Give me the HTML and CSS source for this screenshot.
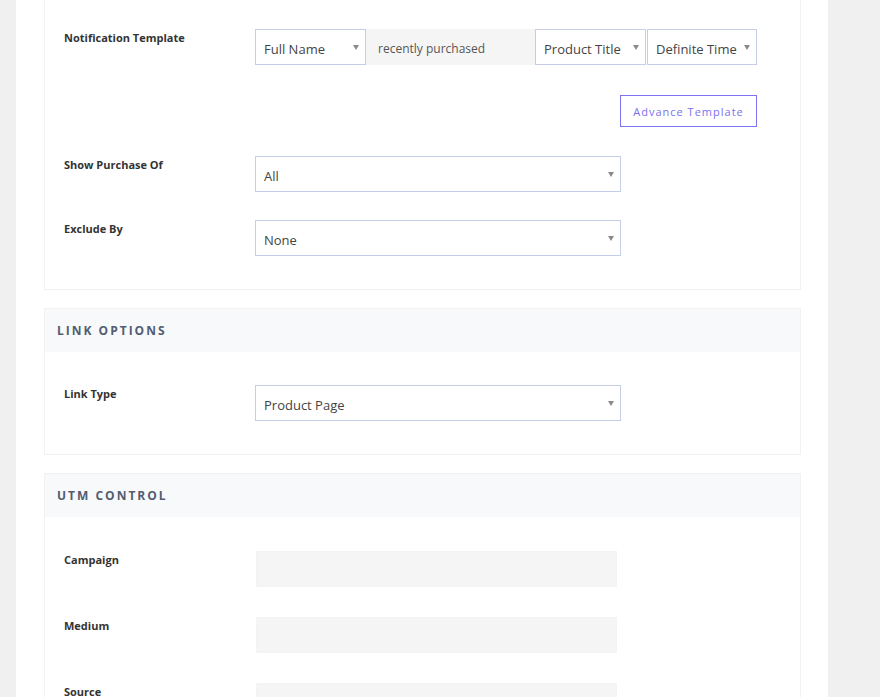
FILE: index.html
```html
<!DOCTYPE html>
<html lang="en">
<head>
    <meta charset="UTF-8">
    <meta name="viewport" content="width=device-width, initial-scale=1.0">
    <title>Notification Settings</title>
    <link rel="stylesheet" href="styles.css">
</head>
<body>
    <div class="page">
        <div class="card card-cut">
            <div class="card-body">
                <div class="row row-template">
                    <label class="label">Notification Template</label>
                    <div class="field">
                        <div class="template">
                            <div class="select small">Full Name</div>
                            <div class="static">recently purchased</div>
                            <div class="select small">Product Title</div>
                            <div class="select small">Definite Time</div>
                        </div>
                        <div class="button-container">
                            <button class="btn-outline">Advance Template</button>
                        </div>
                    </div>
                </div>
                <div class="row">
                    <label class="label">Show Purchase Of</label>
                    <div class="field">
                        <div class="select wide">All</div>
                    </div>
                </div>
                <div class="row">
                    <label class="label">Exclude By</label>
                    <div class="field">
                        <div class="select wide">None</div>
                    </div>
                </div>
            </div>
        </div>

        <div class="card">
            <div class="card-header">Link Options</div>
            <div class="card-body">
                <div class="row">
                    <label class="label">Link Type</label>
                    <div class="field">
                        <div class="select wide">Product Page</div>
                    </div>
                </div>
            </div>
        </div>

        <div class="card">
            <div class="card-header">UTM Control</div>
            <div class="card-body inputs">
                <div class="row">
                    <label class="label">Campaign</label>
                    <div class="field">
                        <input type="text" class="text-input">
                    </div>
                </div>
                <div class="row">
                    <label class="label">Medium</label>
                    <div class="field">
                        <input type="text" class="text-input">
                    </div>
                </div>
                <div class="row">
                    <label class="label">Source</label>
                    <div class="field">
                        <input type="text" class="text-input">
                    </div>
                </div>
            </div>
        </div>
    </div>
</body>
</html>
```

FILE: styles.css
```css
body {
    font-family: "Open Sans", Arial, sans-serif;
    margin: 0;
    padding: 0;
    background: #f0f0f0;
    color: #333;
}

.page {
    margin-left: 16px;
    width: 757px;
    min-height: 697px;
    padding: 0 27px 0 28px;
    background: #fff;
}

.card {
    border: 1px solid #f2f2f2;
    margin-bottom: 18px;
    background: #fff;
}

.card-cut {
    border-top: none;
}

.card-header {
    height: 43px;
    line-height: 43px;
    padding-left: 12px;
    background: #f8f9fb;
    font-size: 12px;
    font-weight: 700;
    letter-spacing: 2px;
    text-transform: uppercase;
    color: #525d71;
}

.card-body {
    padding: 33px 19px 33px 19px;
}

.card-cut .card-body {
    padding-top: 29px;
}

.row {
    display: flex;
    margin-bottom: 28px;
}

.row-template {
    margin-bottom: 29px;
}

.row:last-child {
    margin-bottom: 0;
}

.inputs {
    padding-top: 34px;
}

.inputs .row {
    margin-bottom: 30px;
}

.label {
    width: 191px;
    flex-shrink: 0;
    font-size: 11px;
    font-weight: 700;
    line-height: 18px;
    color: #333;
}

.field {
    flex: 1;
}

.template {
    display: flex;
    width: 502px;
}

.select {
    position: relative;
    box-sizing: border-box;
    height: 36px;
    line-height: 38px;
    padding: 0 16px 0 8px;
    border: 1px solid #c6cde8;
    background: #fff;
    font-size: 13px;
    color: #444;
    white-space: nowrap;
    overflow: hidden;
}

.select::after {
    content: "";
    position: absolute;
    right: 6px;
    top: 15px;
    border-left: 3.5px solid transparent;
    border-right: 3.5px solid transparent;
    border-top: 5px solid #8a8a8a;
}

.select.small {
    width: 111px;
}

.select.small + .select.small {
    width: 110px;
    margin-left: 1px;
}

.select.wide {
    width: 366px;
}

.static {
    box-sizing: border-box;
    width: 169px;
    height: 36px;
    line-height: 39px;
    padding-left: 12px;
    background: #f5f5f5;
    font-size: 12px;
    color: #555;
    white-space: nowrap;
}

.button-container {
    width: 502px;
    text-align: right;
    margin-top: 30px;
}

.btn-outline {
    box-sizing: border-box;
    width: 137px;
    height: 32px;
    padding: 0;
    border: 1.5px solid #7f72f5;
    background: #fff;
    color: #7c70ee;
    font-family: "Open Sans", Arial, sans-serif;
    font-size: 11px;
    letter-spacing: 1px;
    cursor: pointer;
}

.text-input {
    display: block;
    box-sizing: border-box;
    width: 361px;
    height: 36px;
    margin-left: 1px;
    border: 1px solid #f3f3f3;
    background: #f5f5f5;
}
```
